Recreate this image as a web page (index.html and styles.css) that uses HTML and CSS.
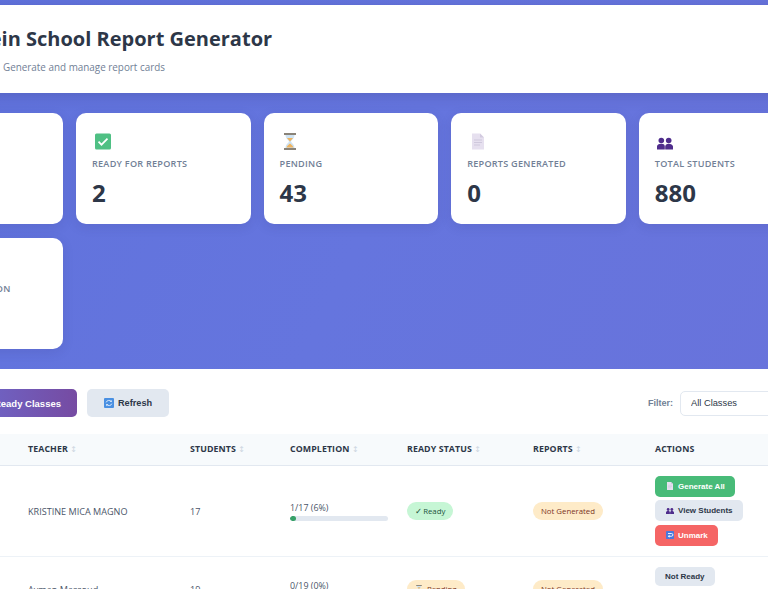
FILE: index.html
```html
<!DOCTYPE html>
<html lang="en">
<head>
<meta charset="utf-8">
<title>Bahrein School Report Generator</title>
<link rel="stylesheet" href="styles.css">
</head>
<body>
<svg class="defs" width="0" height="0" aria-hidden="true">
  <defs>
    <symbol id="i-check" viewBox="0 0 16 16"><rect width="16" height="16" rx="1.5" fill="#4fc084"/><path d="M3.5 8.2l3 3 6-6" fill="none" stroke="#fff" stroke-width="1.7"/></symbol>
    <symbol id="i-hour" viewBox="0 0 14 17"><rect x="1" y="0" width="12" height="2" fill="#8a8378"/><rect x="1" y="15" width="12" height="2" fill="#8a8378"/><path d="M2.500 2h9c0 3.500-3 5-3.500 6.500 .5 1.500 3.500 3 3.500 6.500h-9c0-3.500 3-5 3.500-6.500C5.500 7 2.500 5.500 2.500 2z" fill="#cfe3f2"/><path d="M4 5h6L7 8.500zM3.500 14.500c.5-2 2.500-3 3.500-4 1 1 3 2 3.500 4z" fill="#f0b45e"/></symbol>
    <symbol id="i-doc" viewBox="0 0 12 16"><path d="M0 0h8l4 4v12H0z" fill="#e6e0ef"/><path d="M8 0l4 4H8z" fill="#d2cadf"/><path d="M2 6.500h8M2 9h8M2 11.500h6" stroke="#cfc8dc" stroke-width="1"/></symbol>
    <symbol id="i-people" viewBox="0 0 16 12"><circle cx="4.300" cy="3" r="2.800" fill="#4f2d8c"/><circle cx="11.700" cy="3" r="2.800" fill="#4f2d8c"/><path d="M0 12V9c0-1.500 1.500-2.800 4.300-2.800S7.800 7.500 7.800 9v3zM8.200 12V9c0-1.500 1.500-2.800 3.500-2.800S16 7.500 16 9v3z" fill="#4f2d8c"/></symbol>
    <symbol id="i-refresh" viewBox="0 0 16 16"><rect width="16" height="16" rx="1.500" fill="#4a90e2"/><path d="M3.500 7a4.500 4 0 0 1 8-1.500M12.500 9a4.500 4 0 0 1-8 1.500" fill="none" stroke="#dcebfb" stroke-width="1.500"/><path d="M12.500 3v3.500H9zM3.500 13V9.500H7z" fill="#dcebfb"/></symbol>
    <symbol id="i-unmark" viewBox="0 0 16 16"><rect width="16" height="16" rx="1.500" fill="#4a78dc"/><path d="M4 5h7a2.500 2.500 0 0 1 0 5.500H6" fill="none" stroke="#fff" stroke-width="1.800"/><path d="M7 7.500L3.500 10.500 7 13.500z" fill="#fff"/></symbol>
  </defs>
</svg>
<div class="page">
  <header class="site-header">
    <h1>Bahrein School Report Generator</h1>
    <p>Generate and manage report cards</p>
  </header>

  <section class="stats">
    <article class="card"><svg class="ico"><use href="#i-doc"/></svg><div class="label">Total Classes</div><div class="value">45</div></article>
    <article class="card"><svg class="ico ico-check"><use href="#i-check"/></svg><div class="label">Ready for Reports</div><div class="value">2</div></article>
    <article class="card"><svg class="ico ico-hour"><use href="#i-hour"/></svg><div class="label">Pending</div><div class="value">43</div></article>
    <article class="card"><svg class="ico ico-doc"><use href="#i-doc"/></svg><div class="label">Reports Generated</div><div class="value">0</div></article>
    <article class="card"><svg class="ico ico-people"><use href="#i-people"/></svg><div class="label">Total Students</div><div class="value">880</div></article>
    <article class="card"><svg class="ico"><use href="#i-check"/></svg><div class="label">Average Completion</div><div class="value">0%</div></article>
  </section>

  <main class="panel">
    <div class="toolbar">
      <div class="tool-left">
        <button class="btn btn-primary">Generate All Ready Classes</button>
        <button class="btn btn-soft"><svg class="bico"><use href="#i-refresh"/></svg>Refresh</button>
      </div>
      <label class="filter">Filter:
        <select class="select"><option>All Classes</option></select>
      </label>
    </div>
    <table class="grid">
      <colgroup>
        <col class="c-class"><col class="c-teacher"><col class="c-students"><col class="c-completion"><col class="c-ready"><col class="c-reports"><col class="c-actions">
      </colgroup>
      <thead>
        <tr>
          <th>Class <span class="sort">↕</span></th>
          <th>Teacher <span class="sort">↕</span></th>
          <th>Students <span class="sort">↕</span></th>
          <th>Completion <span class="sort">↕</span></th>
          <th>Ready Status <span class="sort">↕</span></th>
          <th>Reports <span class="sort">↕</span></th>
          <th>Actions</th>
        </tr>
      </thead>
      <tbody>
        <tr>
          <td>Grade 1A</td>
          <td>KRISTINE MICA MAGNO</td>
          <td>17</td>
          <td><div class="prog-text">1/17 (6%)</div><div class="bar"><div class="fill" style="width:6%"></div></div></td>
          <td><span class="badge b-ready"><span class="tick">✓</span>Ready</span></td>
          <td><span class="badge b-warn">Not Generated</span></td>
          <td><div class="actions">
            <button class="btn-sm sm-green"><svg class="sico"><use href="#i-doc"/></svg>Generate All</button>
            <button class="btn-sm sm-grey"><svg class="sico"><use href="#i-people"/></svg>View Students</button>
            <button class="btn-sm sm-red"><svg class="sico"><use href="#i-unmark"/></svg>Unmark</button>
          </div></td>
        </tr>
        <tr>
          <td>Grade 1B</td>
          <td>Ayman Massoud</td>
          <td>19</td>
          <td><div class="prog-text">0/19 (0%)</div><div class="bar"><div class="fill" style="width:0%"></div></div></td>
          <td><span class="badge b-warn"><svg class="sico"><use href="#i-hour"/></svg>Pending</span></td>
          <td><span class="badge b-warn">Not Generated</span></td>
          <td><div class="actions">
            <button class="btn-sm sm-grey sm-plain">Not Ready</button>
            <button class="btn-sm sm-grey"><svg class="sico"><use href="#i-people"/></svg>View Students</button>
          </div></td>
        </tr>
      </tbody>
    </table>
  </main>
</div>
</body>
</html>
```
FILE: styles.css
```css
* { box-sizing: border-box; }
html, body { margin: 0; height: 589px; overflow: hidden; }
body {
  background: #5f6fd8;
  font-family: "Open Sans", "Noto Sans", sans-serif;
  color: #2d3748;
}
.defs { display: block; height: 0; }
.page {
  width: 1000px;
  margin-left: -140px;
  padding-top: 5px;
  background: linear-gradient(115deg, #5f72dc 0%, #6575de 45%, #6a72da 100%);
}
.site-header {
  height: 88px;
  background: #fff;
  padding: 19px 28px 0;
  box-shadow: 0 3px 14px rgba(40, 40, 100, .22);
  position: relative;
}
.site-header h1 {
  margin: 0 0 0 54px;
  font-size: 20px;
  line-height: 30px;
  font-weight: 700;
  color: #2d3748;
}
.site-header p {
  margin: 6px 0 0 115px;
  font-size: 9.900px;
  line-height: 14px;
  color: #718096;
}
.stats {
  display: grid;
  grid-template-columns: repeat(5, 174.600px);
  gap: 14px 13px;
  padding: 20px 28.400px;
}
.card {
  height: 111px;
  background: #fff;
  border-radius: 10px;
  padding: 20px 16px 0;
  box-shadow: 0 3px 12px rgba(40, 40, 100, .12);
}
.ico { display: block; width: 16px; height: 17px; margin-left: 3px; }
.ico-hour { width: 14px; }
.ico-doc { width: 12px; margin-left: 5px; }
.ico-people { margin-top: 4px; height: 13px; margin-left: 2px; }
.label {
  margin-top: 7px;
  font-size: 9.100px;
  line-height: 13px;
  letter-spacing: .25px;
  text-transform: uppercase;
  color: #718096;
  font-weight: 600;
}
.value {
  margin-top: 8px;
  font-size: 24px;
  line-height: 30px;
  font-weight: 700;
  color: #2d3748;
}
.panel { background: #fff; height: 400px; }
.toolbar {
  display: flex;
  justify-content: space-between;
  align-items: center;
  padding: 20px 40px 17px 28px;
}
.tool-left { display: flex; gap: 10px; }
.btn {
  height: 28px;
  border: 0;
  border-radius: 5px;
  font-family: "Liberation Sans", Arial, sans-serif;
  font-size: 9.200px;
  font-weight: 700;
  display: flex;
  align-items: center;
  justify-content: center;
}
.btn-primary {
  width: 189px;
  padding-right: 16px;
  justify-content: flex-end;
  font-size: 9.500px;
  color: #fff;
  background: linear-gradient(90deg, #667eea, #764ba2);
}
.btn-soft { width: 82px; background: #e2e8f0; color: #2d3748; }
.bico { width: 10px; height: 10px; margin-right: 4px; }
.filter {
  font-family: "Liberation Sans", Arial, sans-serif;
  font-size: 9px;
  font-weight: 700;
  color: #718096;
  display: flex;
  align-items: center;
  gap: 7px;
}
.select {
  width: 140px;
  height: 25px;
  border: 1px solid #e2e8f0;
  border-radius: 5px;
  background: #fff;
  padding: 0 6px;
  font-family: "Liberation Sans", Arial, sans-serif;
  font-size: 9.300px;
  color: #2d3748;
}
.grid { width: 1000px; border-collapse: collapse; table-layout: fixed; }
.c-class { width: 152px; }
.c-teacher { width: 162px; }
.c-students { width: 100px; }
.c-completion { width: 117px; }
.c-ready { width: 126px; }
.c-reports { width: 122px; }
.grid th {
  height: 31px;
  padding: 0 0 0 16px;
  background: #f7fafc;
  border-bottom: 1px solid #e2e8f0;
  text-align: left;
  font-size: 8.800px;
  font-weight: 700;
  letter-spacing: .1px;
  text-transform: uppercase;
  color: #2d3748;
}
.sort { font-family: "DejaVu Sans", sans-serif; color: #cbd5e0; font-size: 8px; font-weight: 400; }
.grid td {
  padding: 10px 0 10px 16px;
  border-bottom: 1px solid #edf2f7;
  font-size: 9.100px;
  color: #4a5568;
  vertical-align: middle;
}
.grid td:nth-child(-n+4) { padding-top: 12px; }
.prog-text { font-size: 8.900px; line-height: 12px; margin-bottom: 2px; }
.bar { width: 98px; height: 5px; border-radius: 3px; background: #e2e8f0; overflow: hidden; }
.fill { height: 100%; background: #38a169; border-radius: 3px; }
.badge {
  display: inline-flex;
  align-items: center;
  height: 18px;
  padding: 0 8px;
  border-radius: 9px;
  font-size: 7.800px;
  font-weight: 500;
}
.tick { font-family: "DejaVu Sans", sans-serif; font-size: 8.500px; font-weight: 400; margin-right: 1px; }
.b-ready { background: #c6f6d5; color: #22543d; }
.b-warn { background: #feebc8; color: #7b341e; }
.actions { display: flex; flex-direction: column; align-items: flex-start; gap: 3.500px; }
.btn-sm {
  height: 21px;
  border: 0;
  border-radius: 5px;
  padding: 0 10px 0 11px;
  font-family: "Liberation Sans", Arial, sans-serif;
  font-size: 8px;
  font-weight: 700;
  display: flex;
  align-items: center;
}
.sm-plain { height: 19.500px; padding: 0 10px; }
.sico { width: 8px; height: 8px; margin-right: 4px; }
.sm-green { background: #48bb78; color: #fff; }
.sm-grey { background: #e2e8f0; color: #2d3748; }
.sm-red { background: #f56565; color: #fff; }
```
